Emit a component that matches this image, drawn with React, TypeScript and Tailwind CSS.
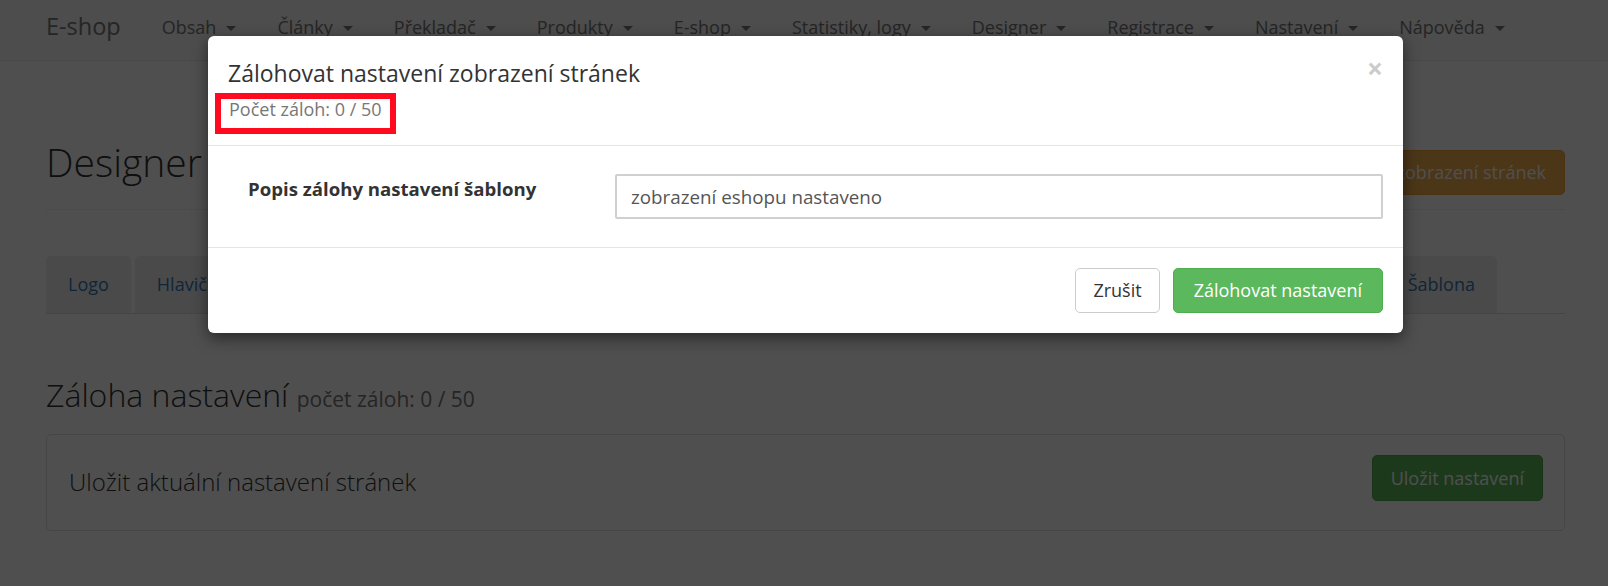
const navItems = [
  "Obsah",
  "Články",
  "Překladač",
  "Produkty",
  "E-shop",
  "Statistiky, logy",
  "Designer",
  "Registrace",
  "Nastavení",
  "Nápověda",
];

function Caret() {
  return (
    <span className="ml-[10px] inline-block h-0 w-0 border-x-[5px] border-t-[5px] border-x-transparent border-t-current align-middle" />
  );
}

function Tab({ label }: { label: string }) {
  return (
    <li className="flex h-[57px] items-center rounded-t-[5px] bg-[#eee] px-[22px] whitespace-nowrap text-[#337ab7]">
      {label}
    </li>
  );
}

export default function App() {
  return (
    <div className="relative h-[586px] w-[1608px] overflow-hidden bg-white font-['Open_Sans',sans-serif] text-[18px] text-[#333]">
      <nav className="flex h-[61px] items-center border-b border-[#e7e7e7] bg-[#f8f8f8] pb-[6px] pl-[46px] text-[#777]">
        <span className="text-[23.5px]">E-shop</span>
        <ul className="ml-[41px] flex gap-[41px]">
          {navItems.map((item) => (
            <li key={item} className="whitespace-nowrap">
              {item}
              <Caret />
            </li>
          ))}
        </ul>
      </nav>

      <main className="pr-[43px] pl-[46px]">
        <div className="mt-[79px] flex items-start justify-between border-b border-[#eee] pb-[14px]">
          <h1 className="text-[39px] leading-[43px] font-light">Designer</h1>
          <button className="mt-[10px] h-[45px] rounded-[5px] border border-[#eea236] bg-[#f0ad4e] px-[18px] text-white">
            Zálohovat nastavení zobrazení stránek
          </button>
        </div>

        {/* tabs covered by the dialog are left as plain blocks */}
        <ul className="mt-[46px] flex gap-[4px] border-b border-[#ddd] pr-[68px]">
          <Tab label="Logo" />
          <Tab label="Hlavička" />
          <li className="h-[57px] grow rounded-t-[5px] bg-[#eee]" />
          <Tab label="Šablona" />
        </ul>

        <h2 className="mt-[63px] text-[32px] leading-[35px] font-light">
          Záloha nastavení{" "}
          <small className="text-[21px] font-normal text-[#777]">počet záloh: 0 / 50</small>
        </h2>

        <div className="mt-[17px] flex items-start justify-between rounded-[5px] border border-[#ddd] pt-[20px] pr-[21px] pb-[29px] pl-[22px]">
          <p className="mt-[11px] text-[24px] leading-[32px] font-light">Uložit aktuální nastavení stránek</p>
          <button className="h-[46px] rounded-[5px] border border-[#4cae4c] bg-[#5cb85c] px-[18px] text-white">
            Uložit nastavení
          </button>
        </div>
      </main>

      <div className="absolute inset-0 bg-black/[0.69]" />

      <div className="absolute top-[36px] left-[208px] w-[1195px] rounded-[6px] bg-white shadow-[0_5px_15px_rgba(0,0,0,0.5)]">
        <div className="relative border-b border-[#e5e5e5] px-[20px] pt-[21px] pb-[11px]">
          <h4 className="text-[23px] leading-[32px]">Zálohovat nastavení zobrazení stránek</h4>
          <div className="mt-[4px] -ml-[13px] inline-block border-[6px] border-[#ff0a1e] px-[8px] pb-[9px] leading-[20px] text-[#777]">
            Počet záloh: 0 / 50
          </div>
          <button className="absolute top-[18px] right-[20px] text-[28px] leading-none font-bold text-black opacity-20">
            ×
          </button>
        </div>

        <div className="flex items-start border-b border-[#e5e5e5] py-[28px] pr-[20px] pl-[40px]">
          <label className="w-[367px] pt-[1px] text-[18.6px] font-bold">Popis zálohy nastavení šablony</label>
          <input
            readOnly
            value="zobrazení eshopu nastaveno"
            className="h-[45px] flex-1 rounded-[2px] border-2 border-[#d0d0d0] pl-[14px] text-[18.8px] text-[#555] outline-none"
          />
        </div>

        <div className="flex justify-end gap-[13px] px-[20px] py-[20px]">
          <button className="h-[45px] rounded-[5px] border border-[#ccc] bg-white px-[17px]">Zrušit</button>
          <button className="h-[45px] rounded-[5px] border border-[#4cae4c] bg-[#5cb85c] px-[20px] text-white">
            Zálohovat nastavení
          </button>
        </div>
      </div>
    </div>
  );
}
